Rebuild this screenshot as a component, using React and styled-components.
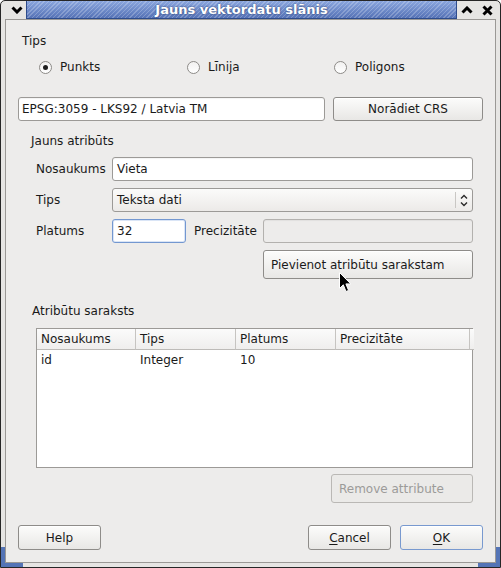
import styled, { createGlobalStyle } from "styled-components";

const GlobalStyle = createGlobalStyle`
  html, body {
    margin: 0;
    padding: 0;
    background: #ffffff;
  }
  body {
    font-family: "DejaVu Sans", "Noto Sans", sans-serif;
    font-size: 12px;
    color: #1a1a1a;
    overflow: hidden;
  }
  * {
    box-sizing: border-box;
  }
`;

const frameBlue = "#5474b6";

const fields = [
  { name: "id", type: "Integer", width: "10", precision: "" },
];

export default function App() {
  return (
    <>
      <GlobalStyle />
      <Window>
        <TitleBar>
          <MenuButton>
            <svg width="12" height="8" viewBox="0 0 12 8">
              <polyline points="1.5,1.5 6,6 10.5,1.5" fill="none" stroke="#000" strokeWidth="3" />
            </svg>
          </MenuButton>
          <Caption>Jauns vektordatu slānis</Caption>
          <WinButton>
            <svg width="12" height="8" viewBox="0 0 12 8">
              <polyline points="1.5,6.5 6,2 10.5,6.5" fill="none" stroke="#000" strokeWidth="3" />
            </svg>
          </WinButton>
          <WinButton>
            <svg width="11" height="11" viewBox="0 0 11 11">
              <path d="M1.5 1.5 L9.5 9.5 M9.5 1.5 L1.5 9.5" stroke="#000" strokeWidth="3" />
            </svg>
          </WinButton>
        </TitleBar>

        <Body>
          <GroupTitle>Tips</GroupTitle>
          <RadioRow>
            <Radio>
              <RadioDot $checked />
              Punkts
            </Radio>
            <Radio>
              <RadioDot />
              Līnija
            </Radio>
            <Radio>
              <RadioDot />
              Poligons
            </Radio>
          </RadioRow>

          <CrsRow>
            <Field $pad={3}>EPSG:3059 - LKS92 / Latvia TM</Field>
            <Button $width={150} $height={24}>Norādiet CRS</Button>
          </CrsRow>

          <GroupTitle $indent={13} $top={13}>Jauns atribūts</GroupTitle>
          <AttrGroup>
            <FieldGrid>
              <Label>Nosaukums</Label>
              <Field $span>Vieta</Field>

              <Label>Tips</Label>
              <Combo>
                <ComboText>Teksta dati</ComboText>
                <ComboArrows>
                  <svg width="8" height="13" viewBox="0 0 8 13">
                    <polyline points="1,4.5 4,1.5 7,4.5" fill="none" stroke="#2a2a2a" strokeWidth="1.4" />
                    <polyline points="1,8.5 4,11.5 7,8.5" fill="none" stroke="#2a2a2a" strokeWidth="1.4" />
                  </svg>
                </ComboArrows>
              </Combo>

              <Label>Platums</Label>
              <Field $focused>32</Field>
              <Label $inline>Precizitāte</Label>
              <Field $disabled />

              <AddCell>
                <Button $height={29} $left>Pievienot atribūtu sarakstam</Button>
              </AddCell>
            </FieldGrid>
          </AttrGroup>

          <GroupTitle $indent={14} $top={25}>Atribūtu saraksts</GroupTitle>
          <AttrGroup>
            <Table>
              <HeaderCell>Nosaukums</HeaderCell>
              <HeaderCell>Tips</HeaderCell>
              <HeaderCell>Platums</HeaderCell>
              <HeaderCell>Precizitāte</HeaderCell>
              <HeaderCell $filler />
              {fields.map((f) => (
                <RowCells key={f.name}>
                  <Cell>{f.name}</Cell>
                  <Cell>{f.type}</Cell>
                  <Cell>{f.width}</Cell>
                  <Cell>{f.precision}</Cell>
                  <Cell />
                </RowCells>
              ))}
            </Table>
            <RemoveRow>
              <Button $width={142} $height={29} $left $disabled>Remove attribute</Button>
            </RemoveRow>
          </AttrGroup>

          <ButtonBar>
            <Button $width={83} $height={25}>Help</Button>
            <Spacer />
            <Button $width={83} $height={25}>
              <span><u>C</u>ancel</span>
            </Button>
            <Button $width={83} $height={25} $default>
              <span><u>O</u>K</span>
            </Button>
          </ButtonBar>
        </Body>

        <Pointer width="13" height="21" viewBox="0 0 13 21">
          <path d="M0.5 0.5 L0.5 16.5 L4.3 12.8 L7 19.5 L9.6 18.4 L6.9 11.9 L11.8 11.9 Z" fill="#000" stroke="#fff" strokeWidth="1" />
        </Pointer>
      </Window>
    </>
  );
}

const Window = styled.div`
  position: relative;
  width: 501px;
  height: 568px;
  display: flex;
  flex-direction: column;
  border: 1px solid #262626;
  border-radius: 5px 5px 0 0;
  background:
    linear-gradient(${frameBlue}, ${frameBlue}) left bottom / 4px 20px no-repeat,
    linear-gradient(${frameBlue}, ${frameBlue}) left bottom / 22px 4px no-repeat,
    linear-gradient(${frameBlue}, ${frameBlue}) right bottom / 4px 20px no-repeat,
    linear-gradient(${frameBlue}, ${frameBlue}) right bottom / 22px 4px no-repeat,
    #e6e5e3;
`;

const TitleBar = styled.div`
  display: flex;
  height: 18px;
  padding-right: 3px;
  flex-shrink: 0;
`;

const MenuButton = styled.div`
  width: 25px;
  display: flex;
  align-items: center;
  justify-content: center;
  padding-left: 6px;
`;

const Caption = styled.div`
  flex: 1;
  display: flex;
  align-items: center;
  justify-content: center;
  font-weight: bold;
  font-size: 13px;
  color: #ffffff;
  text-shadow: 0 0 2px rgba(20, 40, 90, 0.9);
  border: 1px solid #2e4c8c;
  border-top: none;
  background:
    repeating-linear-gradient(135deg, rgba(255, 255, 255, 0.22) 0 1px, transparent 1px 3px),
    linear-gradient(#8aa6de, #5572b6);
`;

const WinButton = styled.div`
  width: 20px;
  display: flex;
  align-items: center;
  justify-content: center;
`;

const Body = styled.div`
  flex: 1;
  margin: 0 4px 4px;
  border: 1px solid #9a9895;
  background: #edeceb;
  padding: 14px 12px 0 12px;
  display: flex;
  flex-direction: column;
  > * {
    flex-shrink: 0;
  }
`;

const GroupTitle = styled.div`
  line-height: 15px;
  height: 15px;
  padding-left: ${(p) => p.$indent ?? 4}px;
  margin-top: ${(p) => p.$top ?? 0}px;
`;

const RadioRow = styled.div`
  margin-top: 10px;
  height: 16px;
  padding-left: 21px;
  display: grid;
  grid-template-columns: 148px 147px 1fr;
  align-items: center;
`;

const Radio = styled.div`
  display: flex;
  align-items: center;
  gap: 8px;
`;

const RadioDot = styled.span`
  width: 13px;
  height: 13px;
  border-radius: 50%;
  border: 1px solid #8d8b88;
  background: linear-gradient(#f2f1f0, #ffffff);
  display: flex;
  align-items: center;
  justify-content: center;
  &::after {
    content: "";
    width: 5px;
    height: 5px;
    border-radius: 50%;
    background: #1e1e1e;
    display: ${(p) => (p.$checked ? "block" : "none")};
  }
`;

const CrsRow = styled.div`
  margin-top: 22px;
  display: flex;
  gap: 8px;
  height: 24px;
`;

const Field = styled.div`
  flex: 1;
  height: 24px;
  display: flex;
  align-items: center;
  padding: 0 ${(p) => p.$pad ?? 4}px;
  white-space: nowrap;
  overflow: hidden;
  grid-column: ${(p) => (p.$span ? "2 / 5" : "auto")};
  background: ${(p) => (p.$disabled ? "#edeceb" : "#ffffff")};
  border: 1px solid
    ${(p) => (p.$focused ? "#7397d0" : p.$disabled ? "#b3b1ae" : "#9c9a97")};
  border-radius: 3px;
  box-shadow: ${(p) =>
    p.$focused
      ? "inset 0 0 0 1px rgba(150, 180, 230, 0.35)"
      : "inset 0 1px 1px rgba(0, 0, 0, 0.05)"};
`;

const Button = styled.div`
  width: ${(p) => (p.$width ? `${p.$width}px` : "100%")};
  height: ${(p) => p.$height}px;
  flex-shrink: 0;
  display: flex;
  align-items: center;
  justify-content: ${(p) => (p.$left ? "flex-start" : "center")};
  padding: 0 7px;
  white-space: nowrap;
  color: ${(p) => (p.$disabled ? "#9c9b99" : "#1a1a1a")};
  border: 1px solid
    ${(p) => (p.$default ? "#7899cf" : p.$disabled ? "#bab8b5" : "#8e8c89")};
  border-radius: 3px;
  background: ${(p) =>
    p.$disabled ? "#ebeae8" : "linear-gradient(#fcfcfb, #e8e7e5)"};
  box-shadow: ${(p) => (p.$disabled ? "none" : "inset 0 1px 0 #ffffff")};
  u {
    text-decoration-thickness: 1px;
    text-underline-offset: 2px;
  }
`;

const AttrGroup = styled.div`
  padding: 0 10px 0 18px;
`;

const FieldGrid = styled.div`
  margin-top: 8px;
  display: grid;
  grid-template-columns: 76px 74px 77px 1fr;
  grid-template-rows: 24px 24px 24px 29px;
  row-gap: 7px;
`;

const Label = styled.div`
  display: flex;
  align-items: center;
  padding-left: ${(p) => (p.$inline ? 8 : 0)}px;
  white-space: nowrap;
`;

const Combo = styled.div`
  grid-column: 2 / 5;
  height: 24px;
  display: flex;
  align-items: center;
  border: 1px solid #9c9a97;
  border-radius: 3px;
  background: linear-gradient(#fbfbfa, #eceae8);
`;

const ComboText = styled.div`
  flex: 1;
  padding-left: 4px;
`;

const ComboArrows = styled.div`
  width: 17px;
  height: 16px;
  border-left: 1px solid #c9c7c4;
  display: flex;
  align-items: center;
  justify-content: center;
`;

const AddCell = styled.div`
  grid-column: 4;
  display: flex;
`;

const Table = styled.div`
  margin-top: 9px;
  height: 140px;
  border: 1px solid #9c9a97;
  background: #ffffff;
  display: grid;
  grid-template-columns: 99px 100px 100px 134px 1fr;
  grid-template-rows: 21px 20px;
  align-content: start;
`;

const HeaderCell = styled.div`
  display: flex;
  align-items: center;
  padding-left: 4px;
  white-space: nowrap;
  border-bottom: 1px solid #bdbbb8;
  border-right: ${(p) => (p.$filler ? "none" : "1px solid #c6c4c1")};
  background: linear-gradient(#fbfbfb, #efeeed);
`;

const RowCells = styled.div`
  display: contents;
`;

const Cell = styled.div`
  display: flex;
  align-items: center;
  padding-left: 4px;
  white-space: nowrap;
`;

const RemoveRow = styled.div`
  margin-top: 6px;
  display: flex;
  justify-content: flex-end;
`;

const ButtonBar = styled.div`
  margin-top: 22px;
  display: flex;
  gap: 9px;
`;

const Spacer = styled.div`
  flex: 1;
`;

const Pointer = styled.svg`
  position: absolute;
  left: 338px;
  top: 271px;
`;
